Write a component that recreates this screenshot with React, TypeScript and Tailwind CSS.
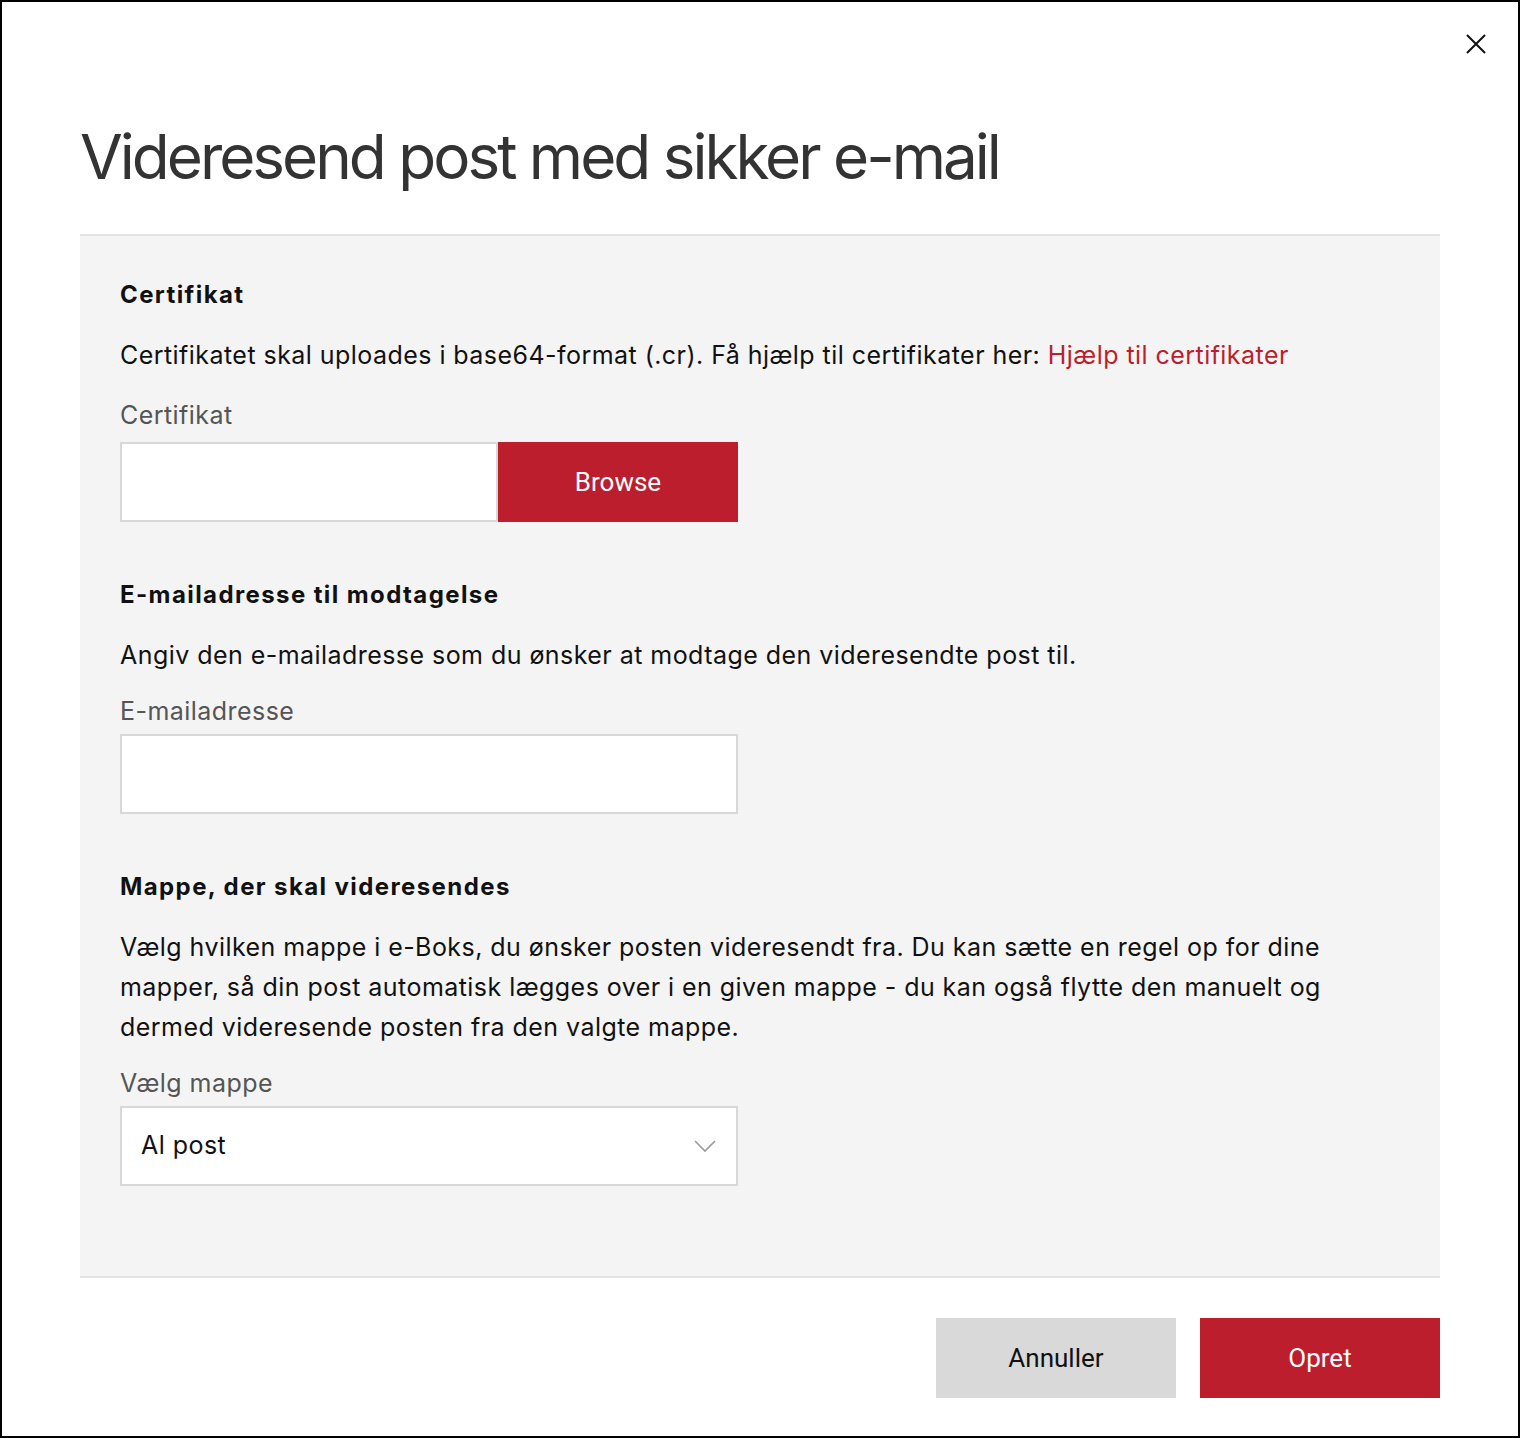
import React from "react";

const body = { fontFamily: "Inter, 'Noto Sans', sans-serif" };
const btn = { fontFamily: "Roboto, 'Liberation Sans', sans-serif" };

export default function App() {
  return (
    <div className="w-[1520px] h-[1438px] bg-white border-2 border-black relative text-[#111]" style={body}>
      <button className="absolute right-[30px] top-[30px] w-[24px] h-[24px] flex items-center justify-center" aria-label="Luk">
        <svg width="22" height="22" viewBox="0 0 22 22" fill="none" stroke="#111" strokeWidth="2">
          <path d="M2 2 L20 20 M20 2 L2 20" />
        </svg>
      </button>
      <div className="px-[78px]">
        <h1 className="pt-[116px] pb-[38px] text-[62px] leading-[78px] text-[#333] tracking-[-3px]">
          Videresend post med sikker e-mail
        </h1>
        <div className="bg-[#f4f4f4] border-t-2 border-b-2 border-[#e2e2e2] px-[40px] pt-[41px] pb-[90px] text-[25px] tracking-[0.45px]">
          <h2 className="font-bold text-[24px] leading-[36px] tracking-[1.4px]">Certifikat</h2>
          <p className="mt-[22px] leading-[40px]">
            Certifikatet skal uploades i base64-format (.cr). Få hjælp til certifikater her:{" "}
            <a className="text-[#bc1e2d]">Hjælp til certifikater</a>
          </p>
          <div className="mt-[20px] leading-[40px] text-[#555]">Certifikat</div>
          <div className="mt-[7px] flex">
            <div className="w-[378px] h-[80px] bg-white border-2 border-[#d8d8d8]" />
            <button className="w-[240px] h-[80px] bg-[#bc1e2d] text-white text-[26px] tracking-normal" style={btn}>
              Browse
            </button>
          </div>

          <h2 className="mt-[55px] font-bold text-[24px] leading-[36px] tracking-[1.4px]">E-mailadresse til modtagelse</h2>
          <p className="mt-[22px] leading-[40px]">
            Angiv den e-mailadresse som du ønsker at modtage den videresendte post til.
          </p>
          <div className="mt-[16px] leading-[40px] text-[#555]">E-mailadresse</div>
          <div className="mt-[3px] w-[618px] h-[80px] bg-white border-2 border-[#d8d8d8]" />

          <h2 className="mt-[55px] font-bold text-[24px] leading-[36px] tracking-[1.4px]">Mappe, der skal videresendes</h2>
          <p className="mt-[22px] leading-[40px] max-w-[1210px]">
            Vælg hvilken mappe i e-Boks, du ønsker posten videresendt fra. Du kan sætte en regel op for dine
            mapper, så din post automatisk lægges over i en given mappe - du kan også flytte den manuelt og
            dermed videresende posten fra den valgte mappe.
          </p>
          <div className="mt-[16px] leading-[40px] text-[#555]">Vælg mappe</div>
          <div className="mt-[3px] w-[618px] h-[80px] bg-white border-2 border-[#d8d8d8] flex items-center justify-between pl-[19px] pr-[20px]">
            <span>Al post</span>
            <svg width="22" height="14" viewBox="0 0 22 14" fill="none" stroke="#9a9a9a" strokeWidth="1.6">
              <path d="M1 2 L11 12 L21 2" />
            </svg>
          </div>
        </div>
        <div className="flex justify-end gap-[24px] pt-[40px]">
          <button className="w-[240px] h-[80px] bg-[#d9d9d9] text-[#111] text-[26px]" style={btn}>
            Annuller
          </button>
          <button className="w-[240px] h-[80px] bg-[#bc1e2d] text-white text-[26px]" style={btn}>
            Opret
          </button>
        </div>
      </div>
    </div>
  );
}
